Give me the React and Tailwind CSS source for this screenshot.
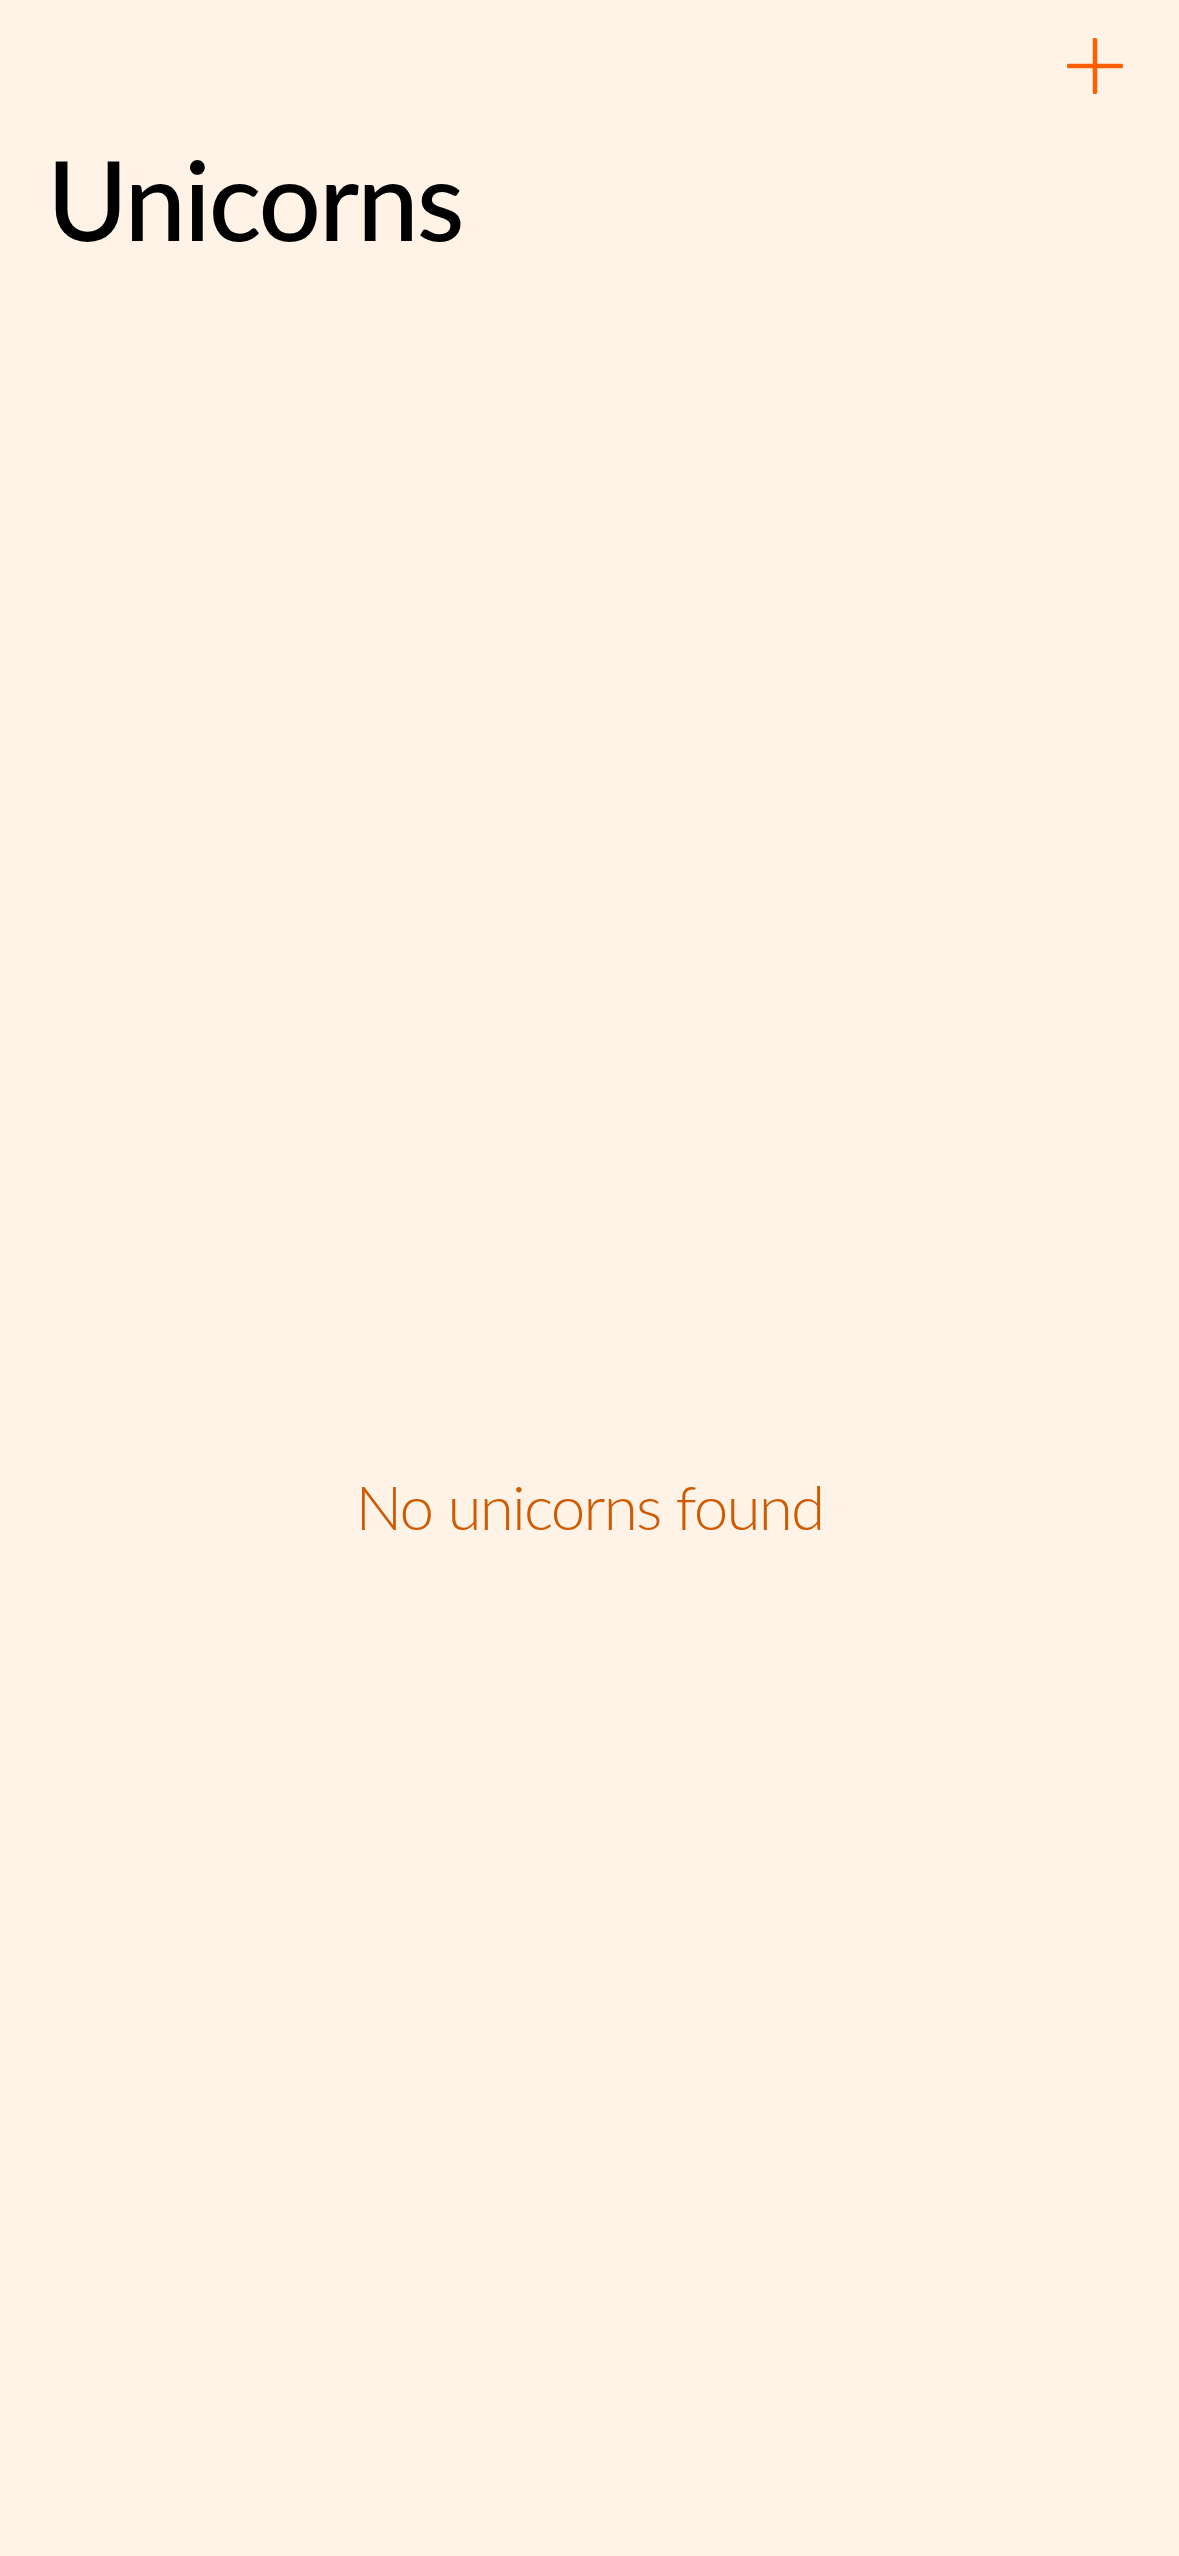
import React from "react";

function PlusIcon() {
  return (
    <svg width="56" height="56" viewBox="0 0 56 56" fill="none">
      <path d="M28 2v52M2 28h52" stroke="#ff5f00" strokeWidth="4.5" strokeLinecap="round" />
    </svg>
  );
}

export default function App() {
  return (
    <div className="min-h-screen w-full bg-[#fff2e7] flex flex-col" style={{ fontFamily: "Lato, 'Open Sans', sans-serif" }}>
      <div className="h-[132px] flex items-center justify-end pr-[56px]">
        <button className="w-[56px] h-[56px] flex items-center justify-center">
          <PlusIcon />
        </button>
      </div>
      <h1 className="px-[47px] text-[110px] leading-[110px] font-medium text-black tracking-[-2px] mt-[11px]">
        Unicorns
      </h1>
      <div className="flex justify-center mt-[1222px]">
        <p className="text-[62px] leading-[62px] font-light text-[#cf5a00] tracking-[-1.8px]">No unicorns found</p>
      </div>
    </div>
  );
}
